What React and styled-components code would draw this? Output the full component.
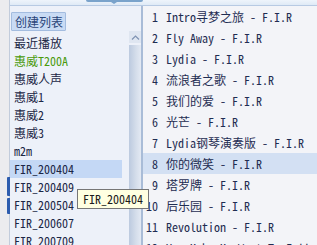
import React from 'react';
import styled, { createGlobalStyle } from 'styled-components';

const playlists = [
  { name: '最近播放' },
  { name: '惠威T200A', green: true },
  { name: '惠威人声' },
  { name: '惠威1' },
  { name: '惠威2' },
  { name: '惠威3' },
  { name: 'm2m' },
  { name: 'FIR_200404', selected: true },
  { name: 'FIR_200409' },
  { name: 'FIR_200504' },
  { name: 'FIR_200607' },
  { name: 'FIR_200709' },
];

const tracks = [
  'Intro寻梦之旅 - F.I.R',
  'Fly Away - F.I.R',
  'Lydia - F.I.R',
  '流浪者之歌 - F.I.R',
  '我们的爱 - F.I.R',
  '光芒 - F.I.R',
  'Lydia钢琴演奏版 - F.I.R',
  '你的微笑 - F.I.R',
  '塔罗牌 - F.I.R',
  '后乐园 - F.I.R',
  'Revolution - F.I.R',
  'You Make Me Want To Fall - F.I.R',
];

const App = () => (
  <>
    <GlobalStyle />
    <Frame>
      <LeftStrip>
        <Marker $h={19} />
        <Marker $h={16} />
      </LeftStrip>
      <Main>
        <TopBar>
          <Tab />
        </TopBar>
        <Body>
          <LeftPane>
            <ListColumn>
              <CreateButton>创建列表</CreateButton>
              <List>
                {playlists.map((p) => (
                  <ListRow key={p.name} $selected={p.selected} $green={p.green}>
                    {p.name}
                  </ListRow>
                ))}
              </List>
            </ListColumn>
            <ScrollBar>
              <ScrollUp>
                <svg width="9" height="5" viewBox="0 0 9 5">
                  <path d="M1 4.5 L4.5 1 L8 4.5" fill="none" stroke="#7f93b3" strokeWidth="1.2" />
                </svg>
              </ScrollUp>
              <ScrollThumb />
            </ScrollBar>
          </LeftPane>
          <RightPane>
            {tracks.map((t, i) => (
              <TrackRow key={t} $active={i === 7}>
                <TrackNo>{i + 1}</TrackNo>
                <TrackTitle>{t}</TrackTitle>
              </TrackRow>
            ))}
          </RightPane>
        </Body>
      </Main>
      <Tooltip>FIR_200404</Tooltip>
    </Frame>
  </>
);

const GlobalStyle = createGlobalStyle`
  html, body {
    margin: 0;
    padding: 0;
    overflow: hidden;
    background: #f3f4f8;
  }
`;

const Frame = styled.div`
  position: relative;
  width: 317px;
  height: 245px;
  display: flex;
  overflow: hidden;
  font-family: "Noto Sans Mono CJK SC", "Liberation Mono", "Noto Sans CJK SC", monospace;
  font-size: 12px;
  color: #1e2b4d;
`;

const LeftStrip = styled.div`
  width: 10px;
  flex: none;
  background: #ececef;
  box-shadow: inset -1px 0 #c2ccdc;
  display: flex;
  flex-direction: column;
  align-items: flex-end;
  gap: 2px;
  padding-top: 177px;
  box-sizing: border-box;
`;

const Marker = styled.div`
  width: 3px;
  height: ${(p) => p.$h}px;
  background: #2d5cae;
  border-radius: 1px 0 0 1px;
`;

const Main = styled.div`
  flex: 1;
  display: flex;
  flex-direction: column;
  min-width: 0;
`;

const TopBar = styled.div`
  height: 5px;
  flex: none;
  background: linear-gradient(#eef4fb, #dfeaf6);
  border-bottom: 1px solid #b7cae3;
  display: flex;
`;

const Tab = styled.div`
  position: relative;
  margin-left: 76px;
  width: 57px;
  height: 2px;
  background: #7aa3cb;
  border-radius: 0 0 3px 3px;

  &::after {
    content: '';
    position: absolute;
    left: 25px;
    top: 2px;
    border-left: 3px solid transparent;
    border-right: 3px solid transparent;
    border-top: 2px solid #7aa3cb;
  }
`;

const Body = styled.div`
  flex: 1;
  display: flex;
  min-height: 0;
`;

const LeftPane = styled.div`
  width: 131px;
  flex: none;
  display: flex;
  background: #edf1f9;
`;

const ListColumn = styled.div`
  width: 119px;
  padding-top: 6px;
  display: flex;
  flex-direction: column;
  align-items: flex-start;
`;

const CreateButton = styled.div`
  margin-left: 1px;
  height: 17px;
  line-height: 17px;
  padding: 0 2px 0 3px;
  background: #c9dbf4;
  border: 1px solid #a3bcdf;
  border-radius: 1px;
  color: #2a4478;
  white-space: nowrap;
`;

const List = styled.div`
  margin-top: 3px;
  width: 112px;
  display: flex;
  flex-direction: column;
`;

const ListRow = styled.div`
  height: 18px;
  line-height: 18px;
  padding-left: 4px;
  white-space: nowrap;
  color: ${(p) => (p.$green ? '#4a9a0c' : '#1c2746')};
  background: ${(p) => (p.$selected ? '#c4d8f5' : 'transparent')};
`;

const ScrollBar = styled.div`
  width: 12px;
  margin-top: 25px;
  display: flex;
  flex-direction: column;
`;

const ScrollUp = styled.div`
  height: 12px;
  display: flex;
  align-items: center;
  justify-content: center;
  background: #dfe6f1;
  border-bottom: 1px solid #edf1f9;
`;

const ScrollThumb = styled.div`
  flex: 1;
  margin-top: 1px;
  background: linear-gradient(to right, #bccadf, #d5deeb 60%, #e3e9f3);
`;

const RightPane = styled.div`
  flex: 1;
  background: #f3f4f8;
  border-left: 2px solid #a9bcd7;
  display: flex;
  flex-direction: column;
`;

const TrackRow = styled.div`
  height: 21px;
  flex: none;
  display: flex;
  align-items: center;
  padding-left: 2px;
  white-space: nowrap;
  color: #1f2d52;
  background: ${(p) => (p.$active ? '#d3e0f3' : 'transparent')};
`;

const TrackNo = styled.span`
  width: 13px;
  text-align: right;
`;

const TrackTitle = styled.span`
  margin-left: 8px;
`;

const Tooltip = styled.div`
  position: absolute;
  left: 77px;
  top: 189px;
  height: 18px;
  line-height: 18px;
  padding: 0 5px;
  background: #ffffe1;
  border: 1px solid #767676;
  color: #1b1b1b;
  white-space: nowrap;
`;

export default App;
